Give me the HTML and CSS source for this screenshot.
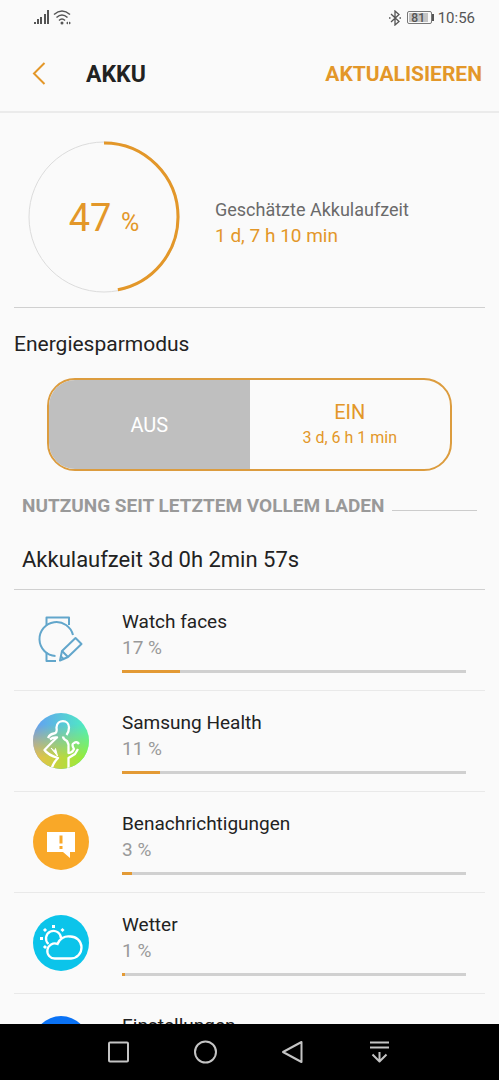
FILE: index.html
```
<!DOCTYPE html>
<html lang="de">
  <head>
    <meta charset="UTF-8" />
    <title>Akku</title>
    <meta name="viewport" content="width=device-width, initial-scale=1.0" />
    <link rel="stylesheet" href="styles.css">
  </head>
  <body>
    <div class="statusbar">
      <svg width="38" height="16" viewBox="0 0 38 16">
        <g fill="#555">
          <rect x="0" y="12" width="2" height="2" />
          <rect x="3" y="9" width="2" height="5" />
          <rect x="6" y="7" width="2" height="7" />
          <rect x="10" y="4" width="2" height="10" />
          <rect x="13" y="0" width="2" height="14" />
          <circle cx="28" cy="13" r="1.5" />
          <path d="M32 13l2-1.500v3zM37 13l-2-1.500v3z" />
        </g>
        <g fill="none" stroke="#555" stroke-width="1.500">
          <path d="M20 4.500Q28-2.500 36 4.500" />
          <path d="M22.500 7.500Q28 2.500 33.500 7.500" />
          <path d="M25 10.500Q28 7.500 31 10.500" />
        </g>
      </svg>
      <div class="statusbar-right">
        <svg width="12" height="16" viewBox="0 0 12 16" fill="none" stroke="#555" stroke-width="1.300">
          <path d="M2 4l8 7.500L6 15V1l4 3.500L2 12" />
          <path d="M0 8h1.500M10.500 8H12" />
        </svg>
        <div class="battery"><span>81</span></div>
        <span>10:56</span>
      </div>
    </div>

    <header class="header">
      <button class="back" aria-label="Zurück">
        <svg width="14" height="24" viewBox="0 0 14 24" fill="none" stroke="#e39729" stroke-width="2">
          <path d="M12.500 1L2 11.500L12.500 22" />
        </svg>
      </button>
      <h1>AKKU</h1>
      <button class="refresh">AKTUALISIEREN</button>
    </header>

    <main>
      <section class="summary">
        <div class="gauge">
          <svg viewBox="0 0 152 152">
            <circle class="gauge-track" cx="76" cy="76" r="75" />
            <circle class="gauge-value" cx="76" cy="76" r="74" pathLength="100" stroke-dasharray="47 53" transform="rotate(-90 76 76)" />
          </svg>
          <div class="gauge-text">47 <small>%</small></div>
        </div>
        <div class="estimate">
          <div>Geschätzte Akkulaufzeit</div>
          <div class="estimate-value">1 d, 7 h 10 min</div>
        </div>
      </section>

      <section class="power-saving">
        <h2>Energiesparmodus</h2>
        <div class="toggle">
          <button class="active">AUS</button>
          <button>EIN<small>3 d, 6 h 1 min</small></button>
        </div>
      </section>

      <h3 class="usage-title">NUTZUNG SEIT LETZTEM VOLLEM LADEN</h3>
      <p class="runtime">Akkulaufzeit 3d 0h 2min 57s</p>

      <ul class="apps">
        <li>
          <svg viewBox="0 0 56 56" fill="none" stroke="#62a6cb" stroke-width="2" stroke-linejoin="round">
            <path d="M13.500 13V5.500H36V13" />
            <path d="M40 23A17 17 0 1 0 22.500 44" />
            <path d="M13.500 40V49H23" />
            <path d="M42.500 26L48.500 32L35 45L27 48.500L29 39Z" />
            <path d="M29 39L35 45M27.500 44L31 47.500" />
          </svg>
          <div class="app">
            <label for="watch">Watch faces</label>
            <span>17 %</span>
            <progress id="watch" value="17" max="100"></progress>
          </div>
        </li>
        <li>
          <svg viewBox="0 0 56 56">
            <defs>
              <linearGradient id="sky" x1="0" y1="0" x2="1" y2="0">
                <stop offset="0" stop-color="#649cf5" />
                <stop offset="1" stop-color="#4df0c0" />
              </linearGradient>
              <linearGradient id="grass" x1="0" y1="0" x2="1" y2="0">
                <stop offset="0" stop-color="#eebc4a" />
                <stop offset="0.600" stop-color="#b4dc3c" />
                <stop offset="1" stop-color="#8cf03c" />
              </linearGradient>
              <linearGradient id="fade" x1="0" y1="0" x2="0" y2="1">
                <stop offset="0.200" stop-color="#000" />
                <stop offset="0.800" stop-color="#fff" />
              </linearGradient>
              <mask id="lower"><rect width="56" height="56" fill="url(#fade)" /></mask>
              <clipPath id="disc"><circle cx="28" cy="28" r="28" /></clipPath>
            </defs>
            <circle cx="28" cy="28" r="28" fill="url(#sky)" />
            <circle cx="28" cy="28" r="28" fill="url(#grass)" mask="url(#lower)" />
            <g clip-path="url(#disc)" fill="none" stroke="#fff" stroke-width="2.300" stroke-linejoin="round">
              <path d="M15 25Q17 21 21 20.500Q24.500 20 23.500 14.500C24 6 36 6 36 14.500Q36 19 33.500 22" />
              <path d="M17 26.500Q20 24 24 24.500Q19 29 11.500 37Q15 42 25 45Q20 50 18.500 56" />
              <path d="M18 35L24.500 43L22.500 35.500L21.500 38Z" fill="#fff" stroke-width="1" />
              <path d="M30 23.500Q30 26 34 28Q36 31 35.500 35V40Q39 40 41 36Q38 31 41 30Q44 28 46 31" />
              <path d="M45 36L42 41L35.500 45V56" />
            </g>
          </svg>
          <div class="app">
            <label for="health">Samsung Health</label>
            <span>11 %</span>
            <progress id="health" value="11" max="100"></progress>
          </div>
        </li>
        <li>
          <svg viewBox="0 0 56 56">
            <circle cx="28" cy="28" r="28" fill="#f9a828" />
            <path d="M14 18h28v20h-5v6l-7-6H14z" fill="#fff" />
            <path d="M26.500 21.500h3v8h-3zM26.500 32h3v3h-3z" fill="#f9a828" />
          </svg>
          <div class="app">
            <label for="notifications">Benachrichtigungen</label>
            <span>3 %</span>
            <progress id="notifications" value="3" max="100"></progress>
          </div>
        </li>
        <li>
          <svg viewBox="0 0 56 56" fill="none" stroke="#fff" stroke-width="2.300">
            <circle cx="28" cy="28" r="28" fill="#0bc4ea" stroke="none" />
            <path d="M15.500 29A7.500 7.500 0 1 1 28 23.500" />
            <path d="M22 43.500A7.500 7.500 0 1 1 24.500 29A11.500 11.500 0 0 1 37 21.500A11 11 0 0 1 38 43.500Z" />
            <path stroke-width="3" d="M20.500 10v3M11 14l2 2M30.500 14l-2 2M7 23.500h3M11 33l2-2" />
          </svg>
          <div class="app">
            <label for="weather">Wetter</label>
            <span>1 %</span>
            <progress id="weather" value="1" max="100"></progress>
          </div>
        </li>
        <li>
          <svg viewBox="0 0 56 56">
            <circle cx="28" cy="28" r="28" fill="#0a72f5" />
          </svg>
          <div class="app">
            <span class="name">Einstellungen</span>
          </div>
        </li>
      </ul>
    </main>

    <nav class="navbar">
      <button aria-label="Übersicht">
        <svg viewBox="0 0 24 24"><rect x="2" y="2.500" width="19" height="19" rx="1" /></svg>
      </button>
      <button aria-label="Startseite">
        <svg viewBox="0 0 24 24"><circle cx="11.500" cy="12" r="10.500" /></svg>
      </button>
      <button aria-label="Zurück">
        <svg viewBox="0 0 24 24"><path d="M20.500 2V22L2 12Z" /></svg>
      </button>
      <button aria-label="Benachrichtigungsfeld">
        <svg viewBox="0 0 24 24"><path d="M2 2.500h19M2 7.500h19M11.500 12v9M4.500 14.500l7 7l7-7" /></svg>
      </button>
    </nav>
  </body>
</html>
```
FILE: styles.css
```
* {
  box-sizing: border-box;
}
body {
  display: flex;
  flex-direction: column;
  height: 100vh;
  margin: 0;
  font-family: Roboto, sans-serif;
  color: #222;
  background: #fafafa;
}
h1,
h2,
h3,
p,
ul {
  margin: 0;
  padding: 0;
}
button {
  padding: 0;
  border: none;
  background: none;
  font-family: inherit;
  cursor: pointer;
}
svg {
  display: block;
}
.statusbar {
  display: flex;
  flex: none;
  justify-content: space-between;
  align-items: center;
  height: 35px;
  padding: 0 24px 0 34px;
  font-size: 15px;
  color: #555;
}
.statusbar-right {
  display: flex;
  align-items: center;
  gap: 6px;
}
.battery {
  display: flex;
  position: relative;
  width: 25px;
  height: 13px;
  padding: 1px;
  border: 1px solid #777;
  border-radius: 2px;
}
.battery span {
  width: 19px;
  background: #c4c4c4;
  font-size: 12px;
  font-weight: 500;
  line-height: 10px;
  text-align: center;
}
.battery::after {
  content: "";
  position: absolute;
  top: 2px;
  right: -3px;
  width: 2px;
  height: 7px;
  background: #555;
}
.header {
  display: flex;
  flex: none;
  align-items: center;
  height: 78px;
  padding: 2px 17px 0 32px;
  border-bottom: 2px solid #ebebeb;
}
.back {
  margin-right: 40px;
}
h1 {
  flex: 1;
  font-size: 23px;
  font-weight: 700;
}
.refresh {
  font-size: 21px;
  font-weight: 700;
  color: #e39729;
}
main {
  flex: 1;
  min-height: 0;
  padding: 0 14px;
  overflow: hidden;
}
.summary {
  display: flex;
  align-items: center;
  padding: 28px 14px 14px;
  border-bottom: 1px solid #d0d0d0;
}
.gauge {
  display: grid;
  width: 152px;
  margin-right: 35px;
}
.gauge svg,
.gauge-text {
  grid-area: 1 / 1;
}
.gauge circle {
  fill: none;
}
.gauge-track {
  stroke: #dcdcdc;
}
.gauge-value {
  stroke: #e39729;
  stroke-width: 3;
}
.gauge-text {
  align-self: center;
  padding-top: 2px;
  text-align: center;
  font-size: 38px;
  color: #e39729;
}
.gauge-text small {
  font-size: 25px;
}
.estimate {
  padding-top: 12px;
  font-size: 18px;
  line-height: 26px;
  color: #6a6a6a;
}
.estimate-value {
  font-size: 19px;
  color: #e39729;
}
h2 {
  padding-top: 22px;
  font-size: 21px;
  font-weight: 400;
  line-height: 28px;
}
.toggle {
  display: flex;
  height: 93px;
  margin: 20px 33px 0;
  border: 2px solid #dc9c3e;
  border-radius: 28px;
  overflow: hidden;
}
.toggle button {
  flex: 1;
  font-size: 20px;
  line-height: 26px;
  color: #e39729;
}
.toggle .active {
  background: #bfbfbf;
  color: #fff;
}
.toggle small {
  display: block;
  font-size: 16px;
}
.usage-title {
  display: flex;
  align-items: center;
  gap: 8px;
  padding: 21px 8px 0;
  font-size: 19px;
  font-weight: 700;
  line-height: 28px;
  color: #999;
}
.usage-title::after {
  content: "";
  flex: 1;
  height: 1px;
  margin-top: 8px;
  background: #ccc;
}
.runtime {
  padding: 26px 8px 15px;
  border-bottom: 1px solid #d0d0d0;
  font-size: 22px;
  line-height: 28px;
}
.apps {
  list-style: none;
}
.apps li {
  display: flex;
  padding: 19px 19px 17px;
  border-bottom: 1px solid #e9e9e9;
}
.apps svg {
  flex: none;
  width: 56px;
  height: 56px;
  margin: 3px 33px 0 0;
}
.app {
  display: flex;
  flex: 1;
  flex-direction: column;
  font-size: 19px;
  line-height: 26px;
}
.app span {
  color: #999;
}
.app .name {
  color: #222;
}
progress {
  appearance: none;
  width: 100%;
  height: 3px;
  margin-top: 9px;
  border: none;
  background: #d0d0d0;
}
progress::-webkit-progress-bar {
  background: #d0d0d0;
}
progress::-webkit-progress-value {
  background: #e39a35;
}
.navbar {
  display: flex;
  flex: none;
  justify-content: center;
  gap: 63px;
  height: 56px;
  background: #000;
}
.navbar svg {
  width: 24px;
  fill: none;
  stroke: #c4c4c4;
  stroke-width: 2;
  stroke-linejoin: round;
}
```
